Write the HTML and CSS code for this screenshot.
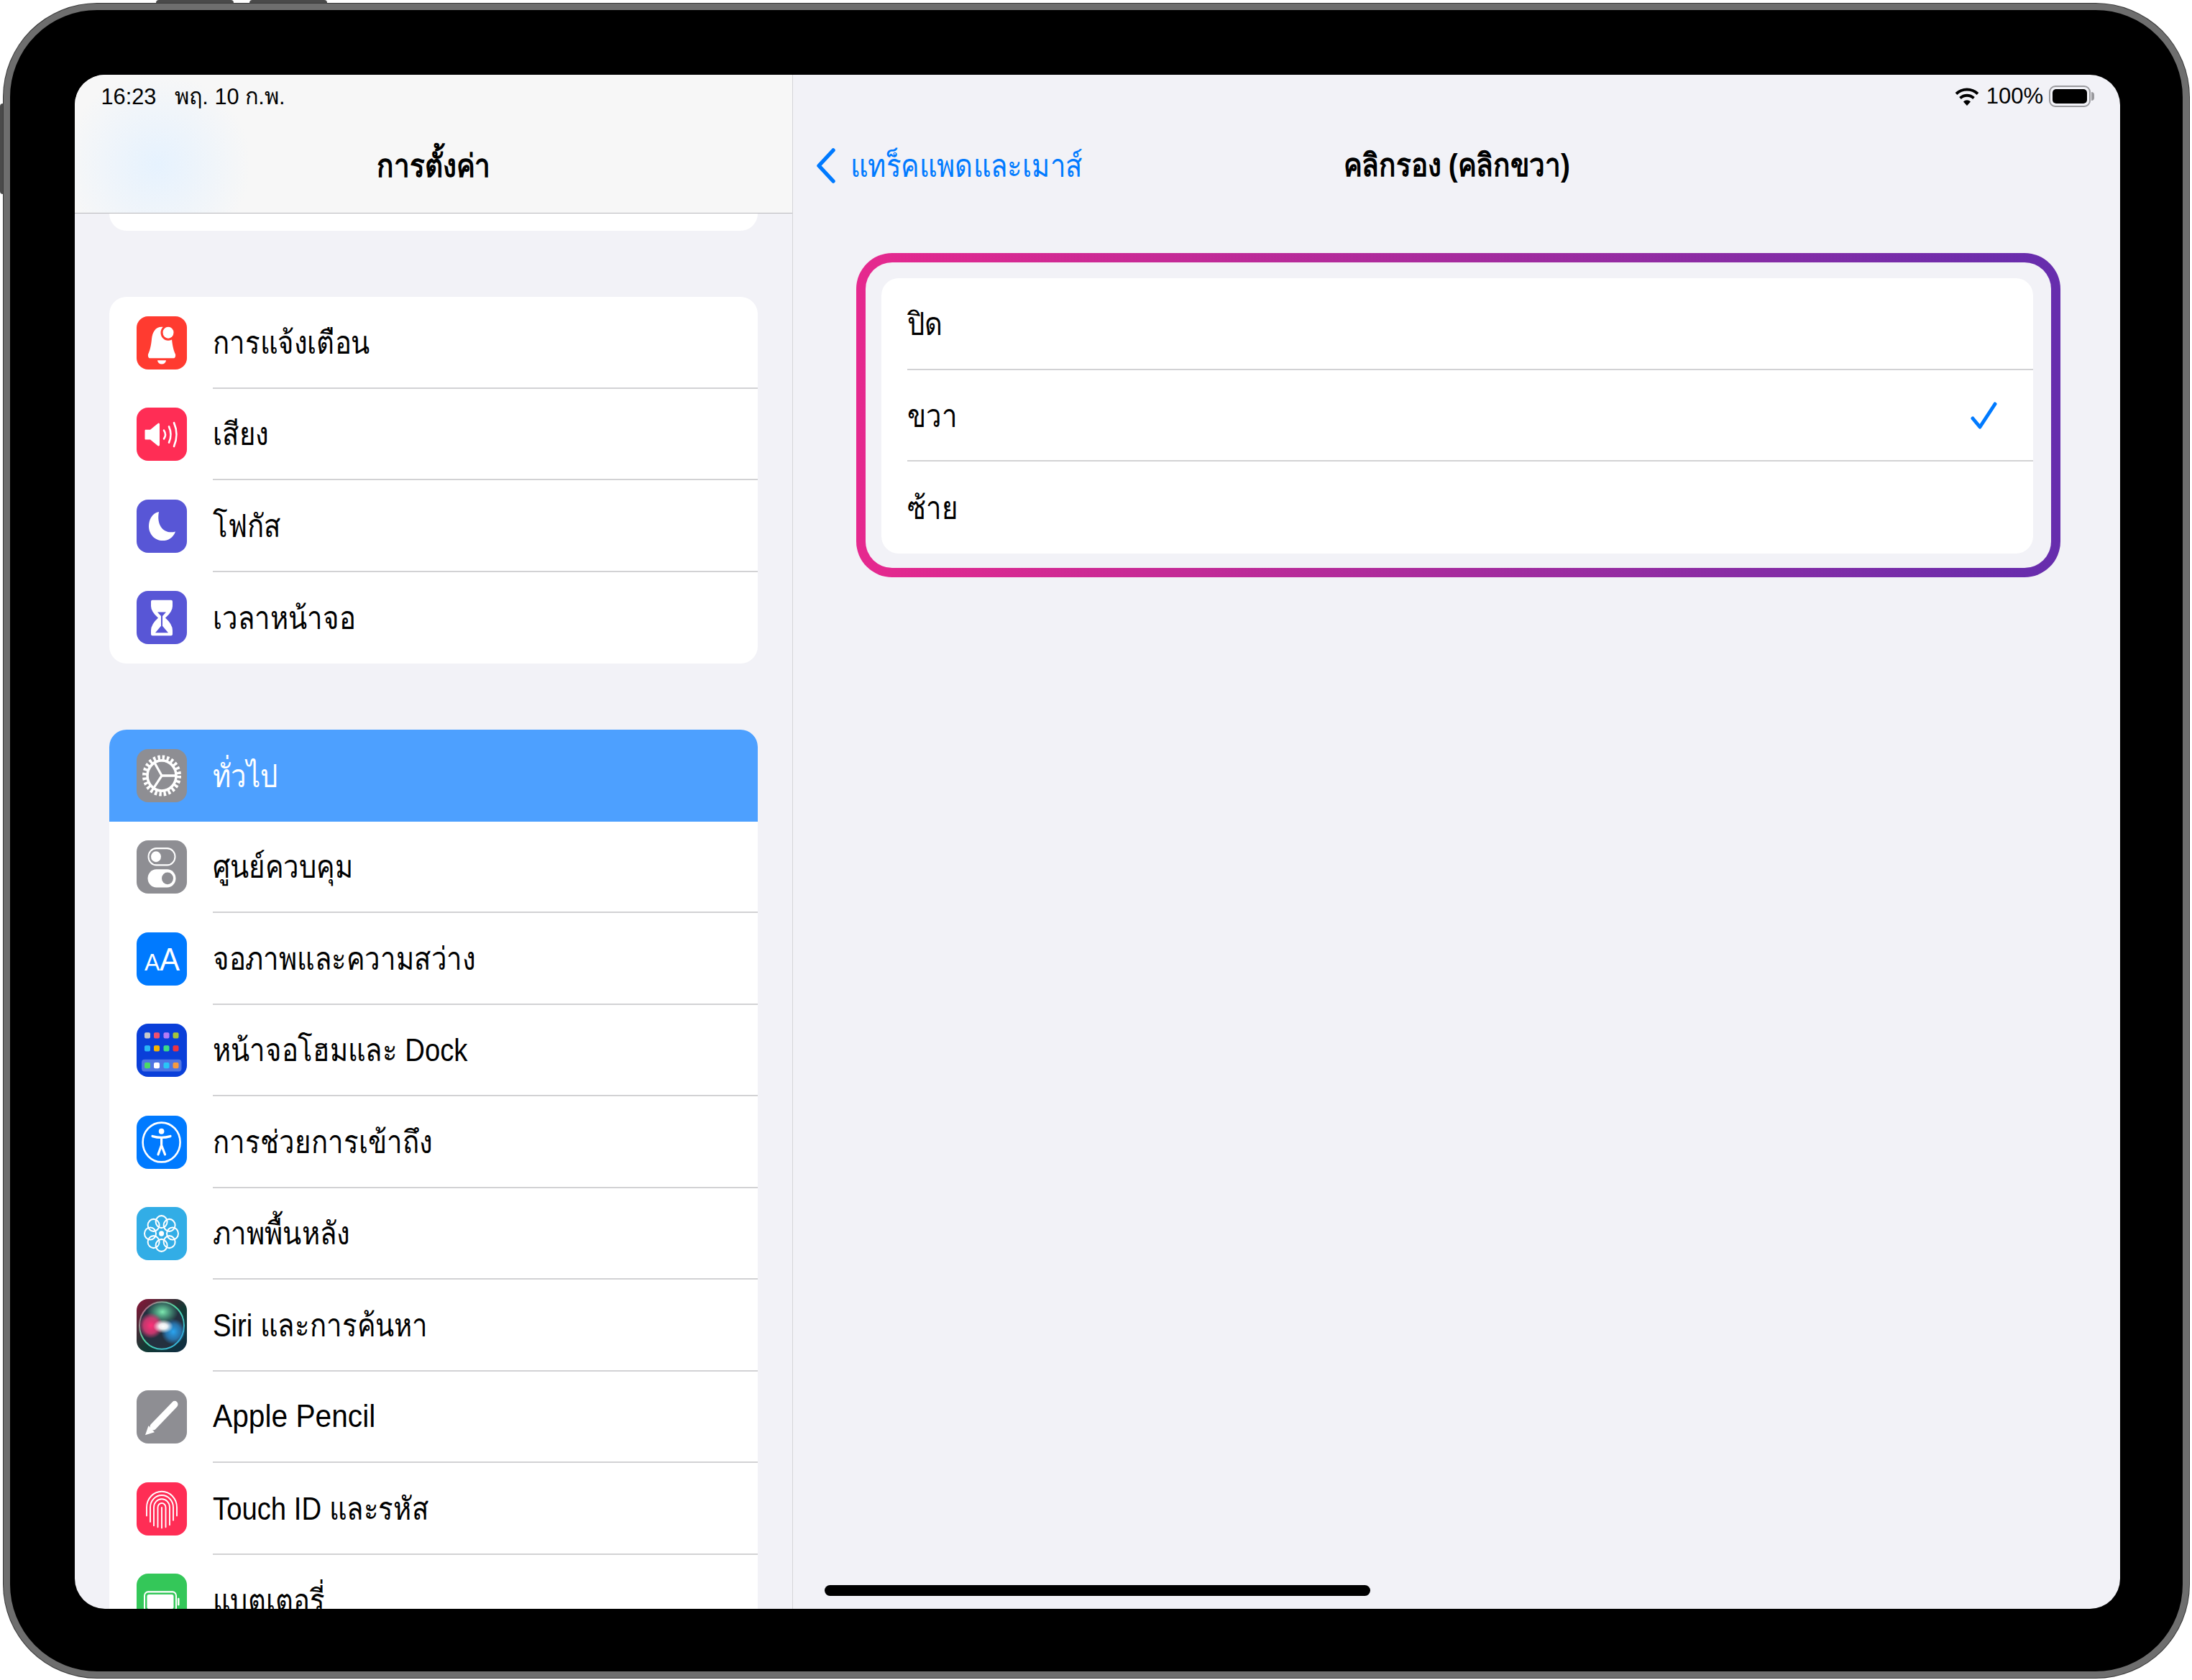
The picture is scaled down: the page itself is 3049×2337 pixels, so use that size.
FILE: index.html
```html
<!DOCTYPE html>
<html lang="th">

<head>
    <meta charset="UTF-8">
    <title>การตั้งค่า</title>
    <link rel="stylesheet" href="styles.css">
</head>

<body>
    <div class="device">
        <span class="hw-btn hw-top hw-top-a"></span>
        <span class="hw-btn hw-top hw-top-b"></span>
        <span class="hw-btn hw-left"></span>

        <div class="screen">
            <aside class="sidebar">
                <header class="side-head">
                    <div class="status-text">16:23&nbsp;&nbsp; พฤ. 10 ก.พ.</div>
                    <h1 class="nav-title">การตั้งค่า</h1>
                </header>

                <div class="side-list">
                    <div class="group stub"></div>

                    <div class="group">
                        <div class="row">
                            <span class="icon ic-red">
                                <svg viewBox="0 0 70 70" preserveAspectRatio="none">
                                    <path fill="#fff" d="M35 14C26 14 22 21 21 30C20 40 18 46 16 50C15.5 53 16.5 55 18 55H52C53.5 55 54.5 53 54 50C52 46 50 40 49 30C48 21 44 14 35 14Z"/>
                                    <path fill="#fff" d="M29 58H41A6 5 0 0 1 29 58Z"/>
                                    <circle cx="44" cy="21.5" r="10.5" fill="#ff3b30"/>
                                    <circle cx="44" cy="21.5" r="7.5" fill="#fff"/>
                                </svg>
                            </span>
                            <span class="row-text"><span class="label">การแจ้งเตือน</span></span>
                        </div>
                        <div class="row">
                            <span class="icon ic-pink">
                                <svg viewBox="0 0 70 70" preserveAspectRatio="none">
                                    <path fill="#fff" d="M12 29H19L30 20.5Q32 20 32 22V49Q32 51 30 50.5L19 42H12Q11.5 42 11.5 41V30Z"/>
                                    <g fill="none" stroke="#fff" stroke-width="2.6" stroke-linecap="round">
                                        <path d="M38 30Q42 35.5 38 41"/>
                                        <path d="M45 25Q50 35.5 45 46"/>
                                        <path d="M52 20Q59 35.5 52 51"/>
                                    </g>
                                </svg>
                            </span>
                            <span class="row-text"><span class="label">เสียง</span></span>
                        </div>
                        <div class="row">
                            <span class="icon ic-indigo">
                                <svg viewBox="0 0 70 70" preserveAspectRatio="none">
                                    <path fill="#fff" d="M31 16C21 18 17 27 17 35C17 46 26 54 36 54C44 54 51 50 54 42C40 46 27 36 31 16Z"/>
                                </svg>
                            </span>
                            <span class="row-text"><span class="label">โฟกัส</span></span>
                        </div>
                        <div class="row">
                            <span class="icon ic-indigo">
                                <svg viewBox="0 0 70 70" preserveAspectRatio="none">
                                    <path fill="#fff" d="M22 12H48Q50 12 50 14V20Q50 27 40 35.5Q50 44 50 52V57Q50 59 48 59H22Q20 59 20 57V52Q20 44 30 35.5Q20 27 20 20V14Q20 12 22 12Z"/>
                                    <path fill="#5856d6" d="M29 28H41L36 33V46L44 55H26L34 46V33Z"/>
                                </svg>
                            </span>
                            <span class="row-text"><span class="label">เวลาหน้าจอ</span></span>
                        </div>
                    </div>

                    <div class="group">
                        <div class="row selected">
                            <span class="icon ic-gray">
                                <svg viewBox="0 0 70 70" preserveAspectRatio="none">
                                    <g fill="none" stroke="#fff">
                                        <circle cx="35" cy="35" r="24" stroke-width="6" stroke-dasharray="3.4 2.88"/>
                                        <circle cx="35" cy="35" r="20" stroke-width="3.6"/>
                                        <path stroke-width="3.2" d="M35 35L25 18M35 35H55M35 35L24 51"/>
                                    </g>
                                </svg>
                            </span>
                            <span class="row-text"><span class="label">ทั่วไป</span></span>
                        </div>
                        <div class="row">
                            <span class="icon ic-gray">
                                <svg viewBox="0 0 70 70" preserveAspectRatio="none">
                                    <rect x="16.5" y="10.5" width="37" height="22" rx="11" fill="none" stroke="#fff" stroke-width="2"/>
                                    <circle cx="27" cy="21.5" r="7" fill="#fff"/>
                                    <rect x="15.5" y="38" width="39" height="24" rx="12" fill="#fff"/>
                                    <circle cx="43" cy="50" r="8" fill="#8e8e93"/>
                                </svg>
                            </span>
                            <span class="row-text"><span class="label">ศูนย์ควบคุม</span></span>
                        </div>
                        <div class="row">
                            <span class="icon ic-blue">
                                <svg viewBox="0 0 70 70" preserveAspectRatio="none">
                                    <text class="aa" x="11" y="50" font-size="32">A</text>
                                    <text class="aa" x="32" y="50" font-size="42">A</text>
                                </svg>
                            </span>
                            <span class="row-text"><span class="label">จอภาพและความสว่าง</span></span>
                        </div>
                        <div class="row">
                            <span class="icon ic-home">
                                <svg viewBox="0 0 70 70" preserveAspectRatio="none">
                                    <rect x="7" y="47" width="55.5" height="16" rx="4" fill="#fff" opacity=".28"/>
                                    <g class="dots">
                                        <rect x="11" y="11.5" width="8" height="8" rx="2" fill="#c9c9c9"/>
                                        <rect x="24" y="11.5" width="8" height="8" rx="2" fill="#f0506e"/>
                                        <rect x="37.5" y="11.5" width="8" height="8" rx="2" fill="#b57bf5"/>
                                        <rect x="50.5" y="11.5" width="8" height="8" rx="2" fill="#a4c639"/>
                                        <rect x="11" y="28.5" width="8" height="8" rx="2" fill="#29b6f6"/>
                                        <rect x="24" y="28.5" width="8" height="8" rx="2" fill="#f7b500"/>
                                        <rect x="37.5" y="28.5" width="8" height="8" rx="2" fill="#3ddc84"/>
                                        <rect x="50.5" y="28.5" width="8" height="8" rx="2" fill="#ef3340"/>
                                        <rect x="11" y="51" width="8" height="8" rx="2" fill="#4cd964"/>
                                        <rect x="24" y="51" width="8" height="8" rx="2" fill="#fff"/>
                                        <rect x="37.5" y="51" width="8" height="8" rx="2" fill="#29c5f6"/>
                                        <rect x="50.5" y="51" width="8" height="8" rx="2" fill="#f79a3e"/>
                                    </g>
                                </svg>
                            </span>
                            <span class="row-text"><span class="label">หน้าจอโฮมและ Dock</span></span>
                        </div>
                        <div class="row">
                            <span class="icon ic-blue">
                                <svg viewBox="0 0 70 70" preserveAspectRatio="none">
                                    <circle cx="34.6" cy="35" r="26" fill="none" stroke="#fff" stroke-width="2.6"/>
                                    <circle cx="34.6" cy="20.5" r="3.8" fill="#fff"/>
                                    <g fill="none" stroke="#fff" stroke-width="3.2" stroke-linecap="round" stroke-linejoin="round">
                                        <path d="M22 27Q34.6 30.5 47 27"/>
                                        <path d="M34.6 29V39L30 51M34.6 39L39.5 51"/>
                                    </g>
                                </svg>
                            </span>
                            <span class="row-text"><span class="label">การช่วยการเข้าถึง</span></span>
                        </div>
                        <div class="row">
                            <span class="icon ic-sky">
                                <svg viewBox="0 0 70 70" preserveAspectRatio="none">
                                    <g fill="none" stroke="#fff" stroke-width="2">
                                        <circle cx="34.6" cy="19.5" r="8"/>
                                        <circle cx="34.6" cy="50.5" r="8"/>
                                        <circle cx="19" cy="35" r="8"/>
                                        <circle cx="50" cy="35" r="8"/>
                                        <circle cx="23.6" cy="24" r="8"/>
                                        <circle cx="45.6" cy="24" r="8"/>
                                        <circle cx="23.6" cy="46" r="8"/>
                                        <circle cx="45.6" cy="46" r="8"/>
                                    </g>
                                    <circle cx="34.6" cy="35" r="3.5" fill="#fff"/>
                                </svg>
                            </span>
                            <span class="row-text"><span class="label">ภาพพื้นหลัง</span></span>
                        </div>
                        <div class="row">
                            <span class="icon ic-siri">
                                <svg viewBox="0 0 70 70" preserveAspectRatio="none">
                                    <defs>
                                        <radialGradient id="siriPink"><stop offset="0" stop-color="#ff2f78"/><stop offset=".6" stop-color="#e83a78" stop-opacity=".8"/><stop offset="1" stop-color="#e83a78" stop-opacity="0"/></radialGradient>
                                        <radialGradient id="siriBlue"><stop offset="0" stop-color="#2aa5f0"/><stop offset=".6" stop-color="#2a8fd8" stop-opacity=".7"/><stop offset="1" stop-color="#2a8fd8" stop-opacity="0"/></radialGradient>
                                        <radialGradient id="siriGreen"><stop offset="0" stop-color="#7fe8b0"/><stop offset="1" stop-color="#4fe0a0" stop-opacity="0"/></radialGradient>
                                        <radialGradient id="siriCore"><stop offset="0" stop-color="#fff"/><stop offset=".4" stop-color="#fff" stop-opacity=".9"/><stop offset="1" stop-color="#fff" stop-opacity="0"/></radialGradient>
                                        <linearGradient id="siriRing" x1="0" y1="0" x2="1" y2="1"><stop offset="0" stop-color="#d8407a"/><stop offset=".45" stop-color="#4fd8a0"/><stop offset="1" stop-color="#2fa8e8"/></linearGradient>
                                    </defs>
                                    <circle cx="35" cy="35" r="31" fill="#24303f" stroke="url(#siriRing)" stroke-width="2"/>
                                    <ellipse cx="36" cy="17" rx="22" ry="16" fill="url(#siriGreen)"/>
                                    <ellipse cx="20" cy="35" rx="17" ry="17" fill="url(#siriPink)"/>
                                    <ellipse cx="51" cy="43" rx="17" ry="17" fill="url(#siriBlue)"/>
                                    <ellipse cx="37" cy="36" rx="14" ry="9" fill="url(#siriCore)"/>
                                </svg>
                            </span>
                            <span class="row-text"><span class="label">Siri และการค้นหา</span></span>
                        </div>
                        <div class="row">
                            <span class="icon ic-gray">
                                <svg viewBox="0 0 70 70" preserveAspectRatio="none">
                                    <path fill="none" stroke="#fff" stroke-width="9" stroke-linecap="round" d="M53 18.5L23 48"/>
                                    <path fill="#fff" d="M16.5 46.5L25 55L12 59Z"/>
                                </svg>
                            </span>
                            <span class="row-text"><span class="label label-latin">Apple Pencil</span></span>
                        </div>
                        <div class="row">
                            <span class="icon ic-pink">
                                <svg viewBox="0 0 70 70" preserveAspectRatio="none">
                                    <g fill="none" stroke="#fff" stroke-width="1.9" stroke-linecap="round">
                                        <path d="M14 44V33A21 21 0 0 1 56 33V44"/>
                                        <path d="M19 52V33A16 16 0 0 1 51 33V50"/>
                                        <path d="M24 57V33A11 11 0 0 1 46 33V56"/>
                                        <path d="M29.5 59V33A5.5 5.5 0 0 1 40.5 33V59"/>
                                        <path d="M35 33V60"/>
                                    </g>
                                </svg>
                            </span>
                            <span class="row-text"><span class="label">Touch ID และรหัส</span></span>
                        </div>
                        <div class="row">
                            <span class="icon ic-green">
                                <svg viewBox="0 0 70 70" preserveAspectRatio="none">
                                    <rect x="11" y="24" width="44" height="26" rx="5" fill="none" stroke="#fff" stroke-width="2"/>
                                    <rect x="14.5" y="27.5" width="37" height="19" rx="2.5" fill="#fff"/>
                                    <rect x="57" y="32" width="2.5" height="10" rx="1.2" fill="#fff"/>
                                </svg>
                            </span>
                            <span class="row-text"><span class="label">แบตเตอรี่</span></span>
                        </div>
                    </div>
                </div>
            </aside>

            <main class="pane">
                <div class="pane-status">
                    <svg class="wifi" viewBox="0 0 33 25">
                        <g fill="none" stroke="#000" stroke-width="4">
                            <path d="M1.5 8.5C10 0.5 23 0.5 31.5 8.5"/>
                            <path d="M7 14.5C12.5 9.5 20.5 9.5 26 14.5"/>
                        </g>
                        <path d="M11.5 19.5C14.5 16.5 18.5 16.5 21.5 19.5L16.5 25Z"/>
                    </svg>
                    <span class="status-text">100%</span>
                    <span class="battery"><span class="battery-fill"></span></span>
                </div>

                <div class="pane-nav">
                    <div class="back">
                        <svg class="chevron" viewBox="0 0 27 49">
                            <path fill="none" stroke="#007aff" stroke-width="5.5" stroke-linecap="round" stroke-linejoin="round" d="M24 3L4 24.5L24 46"/>
                        </svg>
                        <span class="label">แทร็คแพดและเมาส์</span>
                    </div>
                    <h2 class="nav-title">คลิกรอง (คลิกขวา)</h2>
                    <div></div>
                </div>

                <div class="callout">
                    <div class="option-card">
                        <div class="option"><span class="label">ปิด</span></div>
                        <div class="option">
                            <span class="label">ขวา</span>
                            <svg class="check" viewBox="0 0 37 38">
                                <path fill="none" stroke="#007aff" stroke-width="5" stroke-linecap="round" stroke-linejoin="round" d="M3 23L13 35L34 3"/>
                            </svg>
                        </div>
                        <div class="option"><span class="label">ซ้าย</span></div>
                    </div>
                </div>

                <div class="home-bar"></div>
            </main>
        </div>
    </div>
</body>

</html>
```

FILE: styles.css
```css
html,
body {
    margin: 0;
    padding: 0;
    overflow: hidden;
    background-color: #fff;
}

body {
    width: 3049px;
    height: 2337px;
    padding: 5px 4px 3px 5px;
    box-sizing: border-box;
    font-family: "Liberation Sans", "Noto Sans", sans-serif;
    font-size: 44px;
    color: #000;
}

.device {
    position: relative;
    width: 100%;
    height: 100%;
    box-sizing: border-box;
    padding: 90px 87px 87px 90px;
    background-color: #000;
    border: 9px solid #6e6e6e;
    border-radius: 130px;
    box-shadow: 0 0 0 1px #3a3a3a;
}

.hw-btn {
    position: absolute;
    background-color: #4a4a4a;
}

.hw-top {
    top: -14px;
    width: 108px;
    height: 4px;
    border-radius: 4px 4px 0 0;
}

.hw-top-a {
    left: 203px;
}

.hw-top-b {
    left: 333px;
}

.hw-left {
    top: 130px;
    left: -14px;
    width: 4px;
    height: 126px;
    border-radius: 4px 0 0 4px;
}

.screen {
    display: flex;
    height: 100%;
    border-radius: 42px;
    overflow: hidden;
    background-color: #f2f2f7;
}

/* the reference text is narrower than the fonts here */
.label {
    display: inline-block;
    white-space: nowrap;
    transform: scaleX(.87);
    transform-origin: left center;
}

.label-latin {
    transform: scaleX(.925);
}

/* left column */
.sidebar {
    display: flex;
    flex-direction: column;
    width: 998px;
    flex-shrink: 0;
    border-right: 1px solid #d4d4d8;
    overflow: hidden;
}

.side-head {
    height: 192px;
    flex-shrink: 0;
    background-color: #f7f7f7;
    background-image: radial-gradient(ellipse 130px 130px at 115px 125px, #e6f2fe, rgba(230, 242, 254, 0));
    border-bottom: 1px solid #b8b8bb;
}

.side-head .status-text {
    padding: 13px 0 0 38px;
    transform: scaleX(.96);
    transform-origin: left center;
}

.side-head .nav-title {
    text-align: center;
    margin-top: 51px;
}

.status-text {
    font-size: 32px;
    line-height: 34px;
}

.pane-status .status-text {
    font-size: 31px;
}

.nav-title {
    margin: 0;
    font-size: 44px;
    line-height: 58px;
    font-weight: bold;
    transform: scaleX(.88);
}

.side-list {
    flex: 1;
    overflow: hidden;
    padding: 0 48px;
}

.group {
    margin-bottom: 92px;
    background-color: #fff;
    border-radius: 24px;
    overflow: hidden;
}

.stub {
    height: 24px;
    border-radius: 0 0 24px 24px;
}

.row {
    display: flex;
    align-items: center;
    height: 127.5px;
    padding-left: 38px;
}

.row.selected {
    background-color: #4da0ff;
    color: #fff;
}

.icon {
    display: block;
    width: 70px;
    height: 74px;
    flex-shrink: 0;
    border-radius: 16px;
    overflow: hidden;
}

.icon svg {
    display: block;
    width: 100%;
    height: 100%;
}

.ic-red { background-color: #ff3b30; }
.ic-pink { background-color: #ff2d55; }
.ic-indigo { background-color: #5856d6; }
.ic-gray { background-color: #8e8e93; }
.ic-blue { background-color: #007aff; }
.ic-sky { background-color: #32ade6; }
.ic-green { background-color: #34c759; }
.ic-home { background-color: #0a3fd9; }
.ic-siri { background-image: linear-gradient(135deg, #8a1538, #123a34 55%, #102c44); }

.aa {
    fill: #fff;
    font-family: "Liberation Sans", sans-serif;
}

.row-text {
    display: flex;
    align-items: center;
    flex: 1;
    align-self: stretch;
    margin-left: 36px;
    border-bottom: 2px solid #d2d2d4;
}

.row:last-child .row-text,
.row.selected .row-text {
    border-bottom: 0;
}

/* right column */
.pane {
    position: relative;
    flex: 1;
    min-width: 0;
    padding: 0 83px 0 88px;
}

.pane-status {
    position: absolute;
    top: 13px;
    right: 35px;
    display: flex;
    align-items: center;
    gap: 10px;
}

.wifi {
    width: 34px;
    height: 25px;
}

.battery {
    position: relative;
    display: block;
    width: 58px;
    height: 30px;
    box-sizing: border-box;
    padding: 3px;
    margin: 0 6px 0 -2px;
    border: 2px solid #9a9a9e;
    border-radius: 9px;
}

.battery::after {
    content: "";
    position: absolute;
    top: 7px;
    right: -7px;
    width: 4px;
    height: 12px;
    border-radius: 0 4px 4px 0;
    background-color: #9a9a9e;
}

.battery-fill {
    display: block;
    height: 100%;
    background-color: #000;
    border-radius: 5px;
}

.pane-nav {
    display: grid;
    grid-template-columns: 1fr auto 1fr;
    align-items: center;
    height: 192px;
    margin: 0 -83px 56px -88px;
    padding-top: 63px;
    box-sizing: border-box;
    padding-bottom: 3px;
}

.back {
    display: flex;
    align-items: center;
    gap: 21px;
    padding-left: 32px;
    color: #007aff;
}

.chevron {
    width: 27px;
    height: 49px;
    flex-shrink: 0;
}

.callout {
    box-sizing: border-box;
    padding: 22px 25px 20px 22px;
    border: 13px solid transparent;
    border-radius: 50px;
    background-image: linear-gradient(#f2f2f7, #f2f2f7), linear-gradient(90deg, #e6298e, #662dad);
    background-origin: border-box;
    background-clip: padding-box, border-box;
}

.option-card {
    background-color: #fff;
    border-radius: 24px;
    overflow: hidden;
}

.option {
    display: flex;
    align-items: center;
    justify-content: space-between;
    height: 127.7px;
    box-sizing: border-box;
    margin-left: 36px;
    padding-right: 50px;
    border-bottom: 2px solid #d2d2d4;
}

.option:last-child {
    border-bottom: 0;
}

.check {
    width: 37px;
    height: 38px;
}

.home-bar {
    position: absolute;
    left: 44px;
    bottom: 18px;
    width: 759px;
    height: 15px;
    border-radius: 8px;
    background-color: #000;
}
```
